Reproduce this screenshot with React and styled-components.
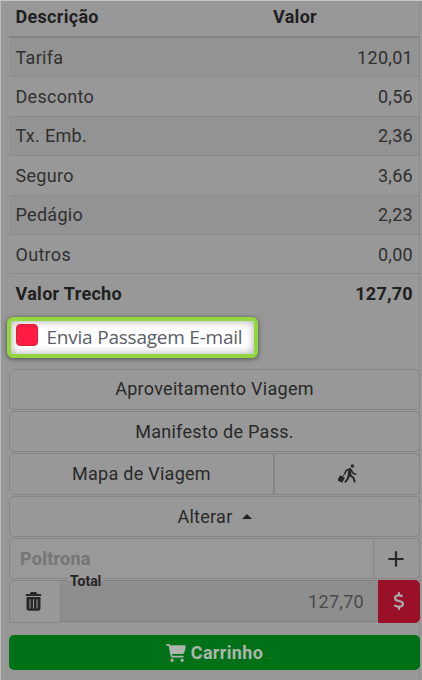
import styled, { createGlobalStyle } from 'styled-components';
import { FaCartShopping, FaDollarSign } from 'react-icons/fa6';

const GlobalStyle = createGlobalStyle`
  * {
    box-sizing: border-box;
  }
  body {
    margin: 0;
    background: #989898;
    font-family: Roboto, 'Liberation Sans', sans-serif;
    font-size: 18px;
    color: #303030;
  }
`;

const Page = styled.main`
  width: 422px;
  height: 680px;
  padding: 0 2px 0 8px;
  border-top: 1px solid #c5c9c6;
  border-left: 1px solid #b9bcba;
  overflow: hidden;
`;

const Card = styled.div`
  height: 100%;
  border-right: 1px solid #8d8d8d;
`;

const Table = styled.div`
  width: 410px;
  height: 315.5px;
`;

const Row = styled.div`
  display: flex;
  justify-content: space-between;
  align-items: center;
  height: 39.4px;
  padding: 0 6px 0 6.5px;
  letter-spacing: 0.3px;
  background: ${(props) => (props.$striped ? '#939393' : 'transparent')};
  border-bottom: 1px solid #8a8a8a;
`;

const HeadRow = styled(Row)`
  height: 37px;
  padding-bottom: 5px;
  font-weight: bold;
  letter-spacing: 0.3px;
  color: #202020;
  border-bottom: 2px solid #838383;
`;

const HeadValue = styled.span`
  width: 140px;
`;

const TotalRow = styled(Row)`
  padding-bottom: 2px;
  font-weight: bold;
  letter-spacing: 0.3px;
  color: #202020;
  border-bottom: 0;
`;

const EmailOption = styled.label`
  display: flex;
  align-items: center;
  gap: 9px;
  width: 251px;
  height: 41px;
  margin-left: -2px;
  padding: 0 0 1px 4.5px;
  background: #fff;
  border: 4px solid #92d53d;
  border-radius: 6px;
  box-shadow: 0 1px 5px rgba(0, 0, 0, 0.5), inset 0 0 9px rgba(0, 0, 0, 0.35);
  font-family: 'Open Sans', sans-serif;
  font-size: 19px;
  letter-spacing: -0.22px;
  color: #5b5e69;
  white-space: nowrap;
`;

const Check = styled.span`
  width: 22px;
  height: 22px;
  margin-top: -4px;
  border-radius: 4px;
  background: #ff1c41;
  border: 1px solid #e01f3e;
`;

const Actions = styled.div`
  display: flex;
  flex-direction: column;
  gap: 1px;
  width: 411px;
  margin-top: 11px;
`;

const Button = styled.button`
  display: flex;
  align-items: center;
  justify-content: center;
  width: ${(props) => props.$width || '100%'};
  height: 41.4px;
  padding: 0 0 0.5px;
  background: #989898;
  border: 1px solid #858585;
  border-radius: ${(props) => props.$radius || '5px'};
  font: inherit;
  letter-spacing: 0.27px;
  color: #282828;
`;

const ButtonGroup = styled.div`
  display: flex;
`;

const CaretUp = styled.span`
  margin-left: 9px;
  border: 5px solid transparent;
  border-top: 0;
  border-bottom-color: #222;
`;

const Seat = styled.input`
  flex: 1;
  min-width: 0;
  height: 41.4px;
  padding: 0 10px;
  border: 1px solid #888;
  border-right: 0;
  border-radius: 5px 0 0 5px;
  background: #999;
  font: inherit;
  font-weight: bold;
  letter-spacing: 0.25px;
  &::placeholder {
    color: #757575;
    opacity: 1;
  }
`;

const AddButton = styled(Button)`
  padding-right: 1px;
`;

const TrashButton = styled(Button)`
  height: 42.3px;
  padding: 0 3px 1px 0;
`;

const Total = styled.div`
  position: relative;
  display: flex;
  align-items: center;
  justify-content: flex-end;
  flex: 1;
  height: 42px;
  padding: 0 14px 0 0;
  background: #8e8e8e;
  border: solid #828282;
  border-width: 1px 0;
  letter-spacing: 0.3px;
  color: #4a4a4a;
`;

const TotalLabel = styled.span`
  position: absolute;
  top: -8px;
  left: 7px;
  padding: 0 2px;
  font-size: 14px;
  line-height: 16px;
  font-weight: bold;
  letter-spacing: 0;
  color: #242424;
  background: linear-gradient(#989898 8px, #8e8e8e 8px);
`;

const PayButton = styled(Button)`
  height: 42.3px;
  padding-right: 1px;
  background: #9b1029;
  border-color: #9b1029;
  color: #aaa;
`;

const CartButton = styled(Button)`
  gap: 5px;
  height: 35.5px;
  margin-top: 11px;
  padding-bottom: 0;
  background: #007116;
  border: 0;
  font-weight: bold;
  letter-spacing: 0.35px;
  color: #adb5ad;
`;

const TravelerIcon = () => (
  <svg width="19" height="19" viewBox="0 0 58 58" fill="none" stroke="currentColor" strokeLinecap="round" strokeLinejoin="round">
    <circle cx="44" cy="6" r="5.5" fill="currentColor" stroke="none" />
    <path d="M36 17L35 34" strokeWidth="10" />
    <path d="M34 16L25 20L21 29" strokeWidth="5" />
    <path d="M40 18L46 28L54 31" strokeWidth="5" />
    <path d="M37 34L47 42L51 54M32 36L30 45L23 54" strokeWidth="6" />
    <path d="M21 29L13 40" strokeWidth="3" />
    <rect x="1" y="37" width="17" height="18" rx="2" transform="rotate(28 10 46)" fill="currentColor" stroke="none" />
  </svg>
);

const TrashIcon = () => (
  <svg width="17" height="19" viewBox="0 0 17 19" fill="none">
    <path d="M0.8 3H16.2M5.5 2.4L6.5 1H10.5L11.5 2.4" stroke="currentColor" strokeWidth="2" />
    <path d="M1.5 5H15.5V16.5Q15.5 18.8 13 18.8H4Q1.5 18.8 1.5 16.5Z" fill="currentColor" />
    <path d="M5 7.3V16.5M8.5 7.3V16.5M12 7.3V16.5" stroke="#989898" strokeWidth="1" />
  </svg>
);

const PlusIcon = () => (
  <svg width="16" height="16" viewBox="0 0 16 16" stroke="currentColor" strokeWidth="2.2" strokeLinecap="round">
    <path d="M8 1.2V14.8M1.2 8H14.8" />
  </svg>
);

const items = [
  ['Tarifa', '120,01'],
  ['Desconto', '0,56'],
  ['Tx. Emb.', '2,36'],
  ['Seguro', '3,66'],
  ['Pedágio', '2,23'],
  ['Outros', '0,00']
];

const App = () => {
  return (
    <>
      <GlobalStyle />
      <Page>
        <Card>
          <Table>
            <HeadRow>
              <span>Descrição</span>
              <HeadValue>Valor</HeadValue>
            </HeadRow>
            {items.map(([name, value], index) => (
              <Row key={name} $striped={index % 2 === 0}>
                <span>{name}</span>
                <span>{value}</span>
              </Row>
            ))}
            <TotalRow>
              <span>Valor Trecho</span>
              <span>127,70</span>
            </TotalRow>
          </Table>
          <EmailOption>
            <Check />
            Envia Passagem E-mail
          </EmailOption>
          <Actions>
            <Button>Aproveitamento Viagem</Button>
            <Button>Manifesto de Pass.</Button>
            <ButtonGroup>
              <Button $width="265px" $radius="5px 0 0 5px">
                Mapa de Viagem
              </Button>
              <Button $width="146px" $radius="0 5px 5px 0">
                <TravelerIcon />
              </Button>
            </ButtonGroup>
            <Button>
              Alterar
              <CaretUp />
            </Button>
            <ButtonGroup>
              <Seat placeholder="Poltrona" />
              <AddButton $width="47px" $radius="0 5px 5px 0">
                <PlusIcon />
              </AddButton>
            </ButtonGroup>
            <ButtonGroup>
              <TrashButton $width="52px" $radius="5px 0 0 0">
                <TrashIcon />
              </TrashButton>
              <Total>
                <TotalLabel>Total</TotalLabel>
                127,70
              </Total>
              <PayButton $width="42px" $radius="0 5px 5px 0">
                <FaDollarSign size={18} />
              </PayButton>
            </ButtonGroup>
            <CartButton>
              <FaCartShopping size={20} />
              Carrinho
            </CartButton>
          </Actions>
        </Card>
      </Page>
    </>
  );
};

export default App;
